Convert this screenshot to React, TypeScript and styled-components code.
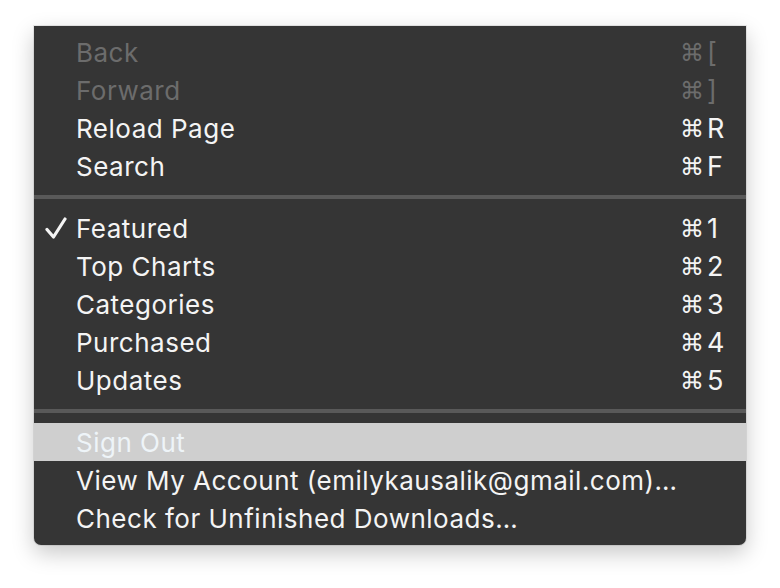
import React from "react";
import styled, { createGlobalStyle } from "styled-components";

const Global = createGlobalStyle`
  html, body { margin: 0; padding: 0; background: #ffffff; }
  body { font-family: Inter, "Noto Sans", sans-serif; }
`;

const Page = styled.div`
  width: 780px;
  height: 588px;
  padding: 26px 0 0 34px;
  box-sizing: border-box;
  overflow: hidden;
`;

const Menu = styled.div`
  width: 712px;
  box-sizing: border-box;
  background: #353535;
  border-radius: 0 0 7px 7px;
  padding: 7px 0 8px;
  box-shadow: 0 8px 22px rgba(0, 0, 0, 0.22), 0 0 0 1px rgba(0, 0, 0, 0.08);
  display: flex;
  flex-direction: column;
`;

const Row = styled.div<{ $disabled?: boolean; $active?: boolean }>`
  height: 38px;
  display: flex;
  align-items: center;
  position: relative;
  padding: 0 19px 0 42px;
  font-size: 26px;
  letter-spacing: 0.5px;
  color: ${(p) => (p.$active ? "#eef4f8" : p.$disabled ? "#6c6c6c" : "#f4f4f4")};
  background: ${(p) => (p.$active ? "#cfcfcf" : "transparent")};
`;

const Label = styled.span`
  flex: 1;
  white-space: nowrap;
`;

const Shortcut = styled.span`
  display: flex;
  align-items: center;
  gap: 3px;
`;

const Cmd = styled.span`
  font-family: "DejaVu Sans", sans-serif;
  font-size: 24px;
  letter-spacing: 0;
  position: relative;
  top: 1px;
`;

const Key = styled.span`
  display: inline-block;
  min-width: 20px;
  font-size: 27px;
  letter-spacing: 0;
  text-align: left;
`;

const Check = styled.svg`
  position: absolute;
  left: 11px;
  top: 8px;
  width: 22px;
  height: 22px;
`;

const Separator = styled.div`
  height: 24px;
  display: flex;
  align-items: center;
  &::after {
    content: "";
    display: block;
    width: 100%;
    height: 4px;
    background: #595959;
  }
`;

type Item = { label: string; key?: string; disabled?: boolean; checked?: boolean; active?: boolean };

const groups: Item[][] = [
  [
    { label: "Back", key: "[", disabled: true },
    { label: "Forward", key: "]", disabled: true },
    { label: "Reload Page", key: "R" },
    { label: "Search", key: "F" },
  ],
  [
    { label: "Featured", key: "1", checked: true },
    { label: "Top Charts", key: "2" },
    { label: "Categories", key: "3" },
    { label: "Purchased", key: "4" },
    { label: "Updates", key: "5" },
  ],
  [
    { label: "Sign Out", active: true },
    { label: "View My Account (emilykausalik@gmail.com)…" },
    { label: "Check for Unfinished Downloads…" },
  ],
];

export default function App() {
  return (
    <>
      <Global />
      <Page>
        <Menu>
          {groups.map((g, gi) => (
            <React.Fragment key={gi}>
              {gi > 0 && <Separator />}
              {g.map((it) => (
                <Row key={it.label} $disabled={it.disabled} $active={it.active}>
                  {it.checked && (
                    <Check viewBox="0 0 22 22">
                      <path d="M2 12.5 L8.5 20 L20 2" fill="none" stroke="#f4f4f4" strokeWidth="3.2" strokeLinecap="round" strokeLinejoin="round" />
                    </Check>
                  )}
                  <Label>{it.label}</Label>
                  {it.key && (
                    <Shortcut>
                      <Cmd>⌘</Cmd>
                      <Key>{it.key}</Key>
                    </Shortcut>
                  )}
                </Row>
              ))}
            </React.Fragment>
          ))}
        </Menu>
      </Page>
    </>
  );
}
